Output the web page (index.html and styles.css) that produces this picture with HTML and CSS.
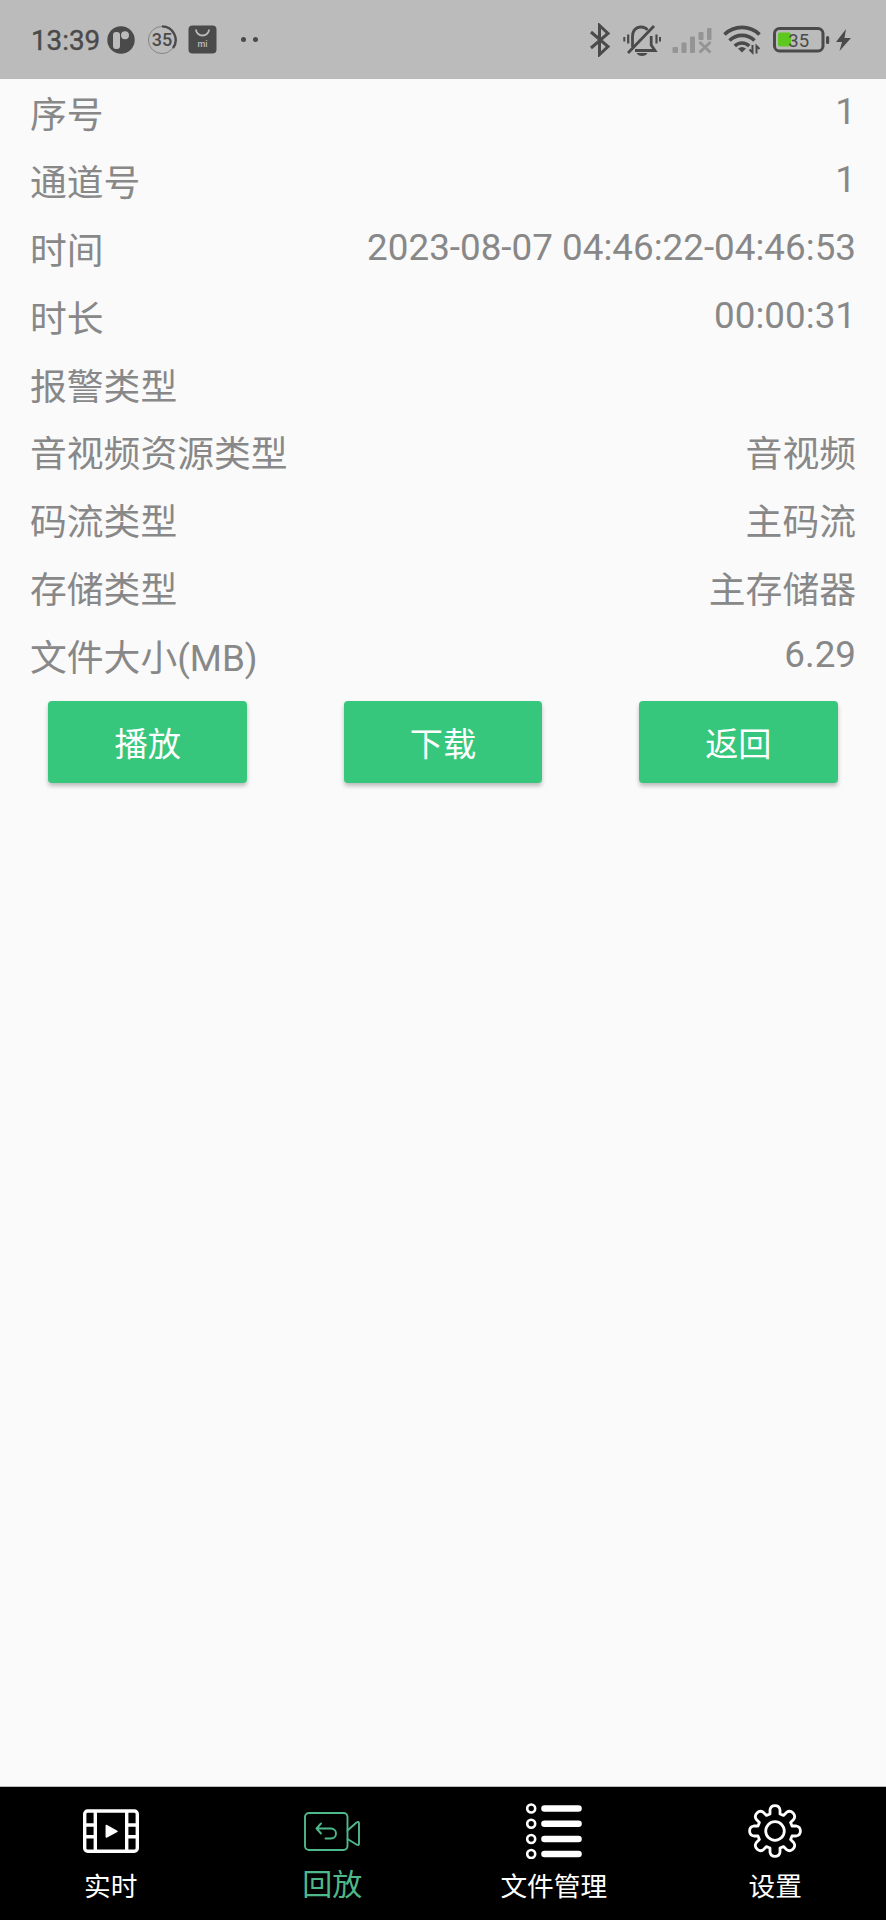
FILE: index.html
```html
<!DOCTYPE html>
<html lang="zh-CN">
<head>
    <meta charset="UTF-8">
    <meta name="viewport" content="width=device-width, initial-scale=1.0">
    <title>回放</title>
    <link rel="stylesheet" href="styles.css">
</head>
<body>
    <header class="status-bar">
        <div class="status-left">
            <span class="clock">13:39</span>
            <svg class="icon-app" width="28" height="28" viewBox="0 0 28 28">
                <circle cx="14" cy="14" r="13.7" fill="#4a4a4a"/>
                <rect x="6" y="6" width="7" height="17" rx="3" fill="#bbb"/>
                <circle cx="18" cy="9.2" r="4" fill="#bbb"/>
            </svg>
            <svg class="icon-ring" width="30" height="30" viewBox="0 0 30 30">
                <circle cx="15" cy="15" r="13.6" fill="none" stroke="#858585" stroke-width="1"/>
                <path d="M15 1.4A13.6 13.6 0 0 1 26 23" fill="none" stroke="#4a4a4a" stroke-width="2.4"/>
                <text x="15" y="20.8" text-anchor="middle" class="ring-text">35</text>
            </svg>
            <svg class="icon-mi" width="29" height="29" viewBox="0 0 29 29">
                <rect x="0.5" y="0.5" width="28" height="28" rx="4" fill="#4a4a4a"/>
                <path d="M8 4.5a6.5 6 0 0 0 13 0" fill="none" stroke="#bbb" stroke-width="1.8"/>
                <text x="14.5" y="21.5" text-anchor="middle" class="mi-text">mi</text>
            </svg>
            <span class="dots"><i></i><i></i></span>
        </div>
        <div class="status-right">
            <svg class="icon-bluetooth" width="22" height="34" viewBox="0 0 22 34">
                <path d="M2 9l17 14.5-8.500 8V2.500l8.500 8L2 25" fill="none" stroke="#4a4a4a" stroke-width="3"/>
            </svg>
            <svg class="icon-mute" width="38" height="34" viewBox="0 0 38 34">
                <g fill="none" stroke="#4a4a4a" stroke-width="2.8">
                    <path d="M9.5 24V13.5C9.5 7.5 13 4 18 4c2.500 0 5 1 6.500 3M28.200 13v9l3.800 5.500H12"/>
                    <path d="M5 30L31 3"/>
                    <path d="M5.2 11.5v9M33.5 11.5v9" stroke-width="2.2"/>
                    <path d="M1.3 14v4.5M37 14v4.5" stroke-width="2"/>
                </g>
                <path d="M13.5 30h11q-1.500 3-5.500 3t-5.500-3z" fill="#4a4a4a"/>
            </svg>
            <svg class="icon-signal" width="40" height="26" viewBox="0 0 40 26">
                <g fill="#949494">
                    <rect x="0.5" y="19" width="5.5" height="6" rx="1"/>
                    <rect x="9.5" y="14.5" width="5" height="10.5" rx="1"/>
                    <rect x="18" y="8.5" width="5" height="16.5" rx="1"/>
                    <rect x="26.5" y="4" width="5" height="8" rx="1"/>
                    <rect x="35" y="0" width="4.5" height="12" rx="1"/>
                </g>
                <path d="M27.5 14l11 10.500M38.500 14l-11 10.500" stroke="#949494" stroke-width="3"/>
            </svg>
            <svg class="icon-wifi" width="38" height="30" viewBox="0 0 38 30">
                <g fill="none" stroke="#4a4a4a" stroke-width="3.6">
                    <path d="M1.5 9.5c9.500-9.500 25.500-9.500 35 0"/>
                    <path d="M6.5 15.5c7-6.800 18-6.800 25 0"/>
                    <path d="M11.8 21c4-4 10.400-4 14.400 0"/>
                </g>
                <path d="M15 23.5q4-3 8 0l-4 4z" fill="#4a4a4a"/>
                <path d="M29.5 20v7.500l-3-3M33.500 28.500V21l3 3" fill="none" stroke="#4a4a4a" stroke-width="2"/>
            </svg>
            <svg class="icon-battery" width="57" height="26" viewBox="0 0 57 26">
                <rect x="1.5" y="1.5" width="48.5" height="22.5" rx="5" fill="none" stroke="#4a4a4a" stroke-width="3"/>
                <rect x="5" y="5.5" width="13" height="14" rx="2" fill="#5fc81e"/>
                <rect x="53" y="9" width="3.2" height="8" rx="1.5" fill="#4a4a4a"/>
                <text x="25.7" y="19.5" text-anchor="middle" class="battery-text">35</text>
            </svg>
            <svg class="icon-bolt" width="17" height="24" viewBox="0 0 17 24">
                <path d="M11 1L1 14h6L4.500 23 16 10H9.500z" fill="#4a4a4a"/>
            </svg>
        </div>
    </header>

    <main class="content">
        <dl class="details">
            <div class="row"><dt>序号</dt><dd class="num">1</dd></div>
            <div class="row"><dt>通道号</dt><dd class="num">1</dd></div>
            <div class="row"><dt>时间</dt><dd class="num">2023-08-07 04:46:22-04:46:53</dd></div>
            <div class="row"><dt>时长</dt><dd class="num">00:00:31</dd></div>
            <div class="row"><dt>报警类型</dt><dd></dd></div>
            <div class="row"><dt>音视频资源类型</dt><dd>音视频</dd></div>
            <div class="row"><dt>码流类型</dt><dd>主码流</dd></div>
            <div class="row"><dt>存储类型</dt><dd>主存储器</dd></div>
            <div class="row"><dt>文件大小(MB)</dt><dd class="num">6.29</dd></div>
        </dl>
        <div class="actions">
            <button type="button">播放</button>
            <button type="button">下载</button>
            <button type="button">返回</button>
        </div>
    </main>

    <nav class="tab-bar">
        <a class="tab">
            <svg width="56" height="56" viewBox="0 0 56 56">
                <g fill="none" stroke="#fff" stroke-width="3.4">
                    <rect x="1.7" y="8" width="52.6" height="40.3" rx="3"/>
                    <path d="M12.3 8v40M43.7 8v40M1.7 22h10.6M1.7 33.7h10.6M43.7 22h10.6M43.7 33.7h10.6"/>
                </g>
                <path d="M23.3 22.5L34 28.3 23.3 34z" fill="#fff" stroke="#fff" stroke-width="1.5" stroke-linejoin="round"/>
            </svg>
            <span>实时</span>
        </a>
        <a class="tab active">
            <svg width="56" height="56" viewBox="0 0 56 56">
                <g fill="none" stroke="#4fb88a" stroke-width="1.9" stroke-linecap="round" stroke-linejoin="round">
                    <rect x="1" y="10" width="42.5" height="37" rx="4"/>
                    <path d="M43.5 27.5l9-8q2.500-1.500 2.500 1v20q0 2.500-2.500 1l-9-5.500"/>
                    <path d="M17 20.5l-4.500 5 4.500 5M12.500 25.500H27a5 5 0 0 1 0 10h-5.500"/>
                </g>
            </svg>
            <span>回放</span>
        </a>
        <a class="tab">
            <svg width="56" height="56" viewBox="0 0 56 56">
                <g fill="none" stroke="#fff" stroke-width="2.6">
                    <circle cx="5.2" cy="5.5" r="4"/>
                    <circle cx="5.2" cy="20.8" r="4"/>
                    <circle cx="5.2" cy="36" r="4"/>
                    <circle cx="5.2" cy="51" r="4"/>
                </g>
                <path d="M18.5 5.5h34M18.5 20.8h34M18.5 36h34M18.5 51h34" stroke="#fff" stroke-width="6.6" stroke-linecap="round"/>
            </svg>
            <span>文件管理</span>
        </a>
        <a class="tab">
            <svg width="56" height="56" viewBox="0 0 56 56">
                <g transform="translate(28 28)" fill="none" stroke="#fff" stroke-width="2.8" stroke-linejoin="round">
                    <circle r="9.3"/>
                    <path d="M-5 -17V-21.3A5.1 5.1 0 0 1 5 -21.3V-17
                        L8.5 -15.6L11.5 -18.6A5.1 5.1 0 0 1 18.6 -11.5L15.6 -8.5
                        L17 -5H21.3A5.1 5.1 0 0 1 21.3 5H17
                        L15.6 8.5L18.6 11.5A5.1 5.1 0 0 1 11.5 18.6L8.5 15.6
                        L5 17V21.3A5.1 5.1 0 0 1 -5 21.3V17
                        L-8.5 15.6L-11.5 18.6A5.1 5.1 0 0 1 -18.6 11.5L-15.6 8.5
                        L-17 5H-21.3A5.1 5.1 0 0 1 -21.3 -5H-17
                        L-15.6 -8.5L-18.6 -11.5A5.1 5.1 0 0 1 -11.5 -18.6L-8.5 -15.6Z"/>
                </g>
            </svg>
            <span>设置</span>
        </a>
    </nav>
</body>
</html>
```

FILE: styles.css
```css
* {
    box-sizing: border-box;
}
body {
    margin: 0;
    height: 1920px;
    display: flex;
    flex-direction: column;
    font-family: Roboto, "Noto Sans CJK SC", sans-serif;
    background-color: #fafafa;
    color: #888;
}

/* Status bar */
.status-bar {
    display: flex;
    justify-content: space-between;
    align-items: center;
    height: 79px;
    padding: 0 34px 0 31px;
    background-color: #bbb;
    color: #4a4a4a;
}
.status-left,
.status-right {
    display: flex;
    align-items: center;
}
.clock {
    font-size: 27.8px;
    line-height: 30px;
    margin-top: 2px;
    -webkit-text-stroke: 0.4px #4a4a4a;
}
.icon-app {
    margin-left: 7px;
}
.icon-ring {
    margin-left: 12px;
}
.icon-mi {
    margin-left: 11px;
}
.ring-text {
    font-size: 18px;
    font-weight: 500;
    fill: #4a4a4a;
}
.mi-text {
    font-size: 9px;
    font-weight: 500;
    fill: #bbb;
}
.battery-text {
    font-size: 18.5px;
    fill: #4a4a4a;
}
.dots {
    display: flex;
    gap: 7px;
    margin-left: 24px;
}
.dots i {
    width: 5px;
    height: 5px;
    border-radius: 50%;
    background-color: #4a4a4a;
}
.icon-mute {
    margin-left: 12px;
}
.icon-signal {
    margin-left: 11px;
    margin-top: 2px;
}
.icon-wifi {
    margin-left: 11px;
}
.icon-battery {
    margin-left: 12px;
}
.icon-bolt {
    margin-left: 5px;
}

/* Recording details */
.content {
    flex: 1;
}
.details {
    margin: 0;
    padding: 0 30px;
}
.row {
    display: flex;
    justify-content: space-between;
    align-items: flex-start;
    height: 67.8px;
    padding-top: 8.4px;
    font-size: 36.8px;
    line-height: 58px;
}
.row dd {
    margin: 0;
}
.row .num {
    line-height: 50px;
}

/* Buttons */
.actions {
    display: flex;
    padding-top: 12px;
}
.actions button {
    flex: 1;
    height: 82px;
    margin: 0 48.3px;
    padding: 0 0 2px;
    border: none;
    border-radius: 4px;
    background-color: #36c77d;
    color: #fff;
    font-family: inherit;
    font-size: 33.2px;
    box-shadow: 0 3px 4px rgba(0, 0, 0, 0.25);
}

/* Bottom tabs */
.tab-bar {
    display: flex;
    height: 134px;
    border-top: 1px solid #bbb;
    background-color: #000;
}
.tab {
    flex: 1;
    display: flex;
    flex-direction: column;
    align-items: center;
    padding-top: 16px;
    color: #fff;
    font-size: 26.7px;
    line-height: 40px;
}
.tab span {
    margin-top: 8px;
}
.tab.active {
    color: #4fb88a;
    font-size: 30px;
}
.tab.active span {
    margin-top: 6px;
}
```
